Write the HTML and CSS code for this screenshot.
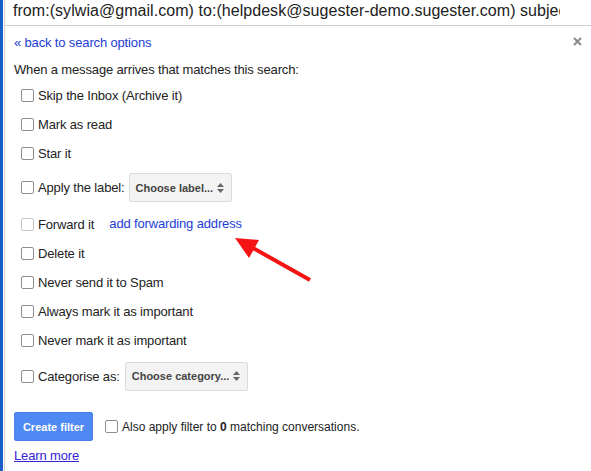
FILE: index.html
```html
<!DOCTYPE html>
<html>
<head>
<meta charset="utf-8">
<link rel="stylesheet" href="styles.css">
</head>
<body>
<div class="page">
  <div class="strip"></div>
  <div class="main">
    <div class="search"><span class="query">from:(sylwia@gmail.com) to:(helpdesk@sugester-demo.sugester.com) subject:</span></div>
    <div class="panel">
      <div class="top">
        <a class="link">« back to search options</a>
        <span class="close"><svg width="9" height="9" viewBox="0 0 9 9"><path d="M1 1L8 8M8 1L1 8" stroke="#8a8a8a" stroke-width="2"/></svg></span>
      </div>
      <div class="intro">When a message arrives that matches this search:</div>
      <div class="row"><span class="cb"></span><span>Skip the Inbox (Archive it)</span></div>
      <div class="row"><span class="cb"></span><span>Mark as read</span></div>
      <div class="row"><span class="cb"></span><span>Star it</span></div>
      <div class="row row-select"><span class="cb"></span><span>Apply the label:</span><span class="select sel-label">Choose label...<span class="arrows"><svg width="7" height="10" viewBox="0 0 7 10"><path d="M0 4L3.5 0L7 4Z M0 6L3.5 10L7 6Z" fill="#666"/></svg></span></span></div>
      <div class="row row-fwd"><span class="cb cb-off"></span><span>Forward it</span><a class="link fwd-link">add forwarding address</a></div>
      <div class="row"><span class="cb"></span><span>Delete it</span></div>
      <div class="row"><span class="cb"></span><span>Never send it to Spam</span></div>
      <div class="row"><span class="cb"></span><span>Always mark it as important</span></div>
      <div class="row"><span class="cb"></span><span>Never mark it as important</span></div>
      <div class="row row-cat"><span class="cb"></span><span>Categorise as:</span><span class="select sel-cat">Choose category...<span class="arrows"><svg width="7" height="10" viewBox="0 0 7 10"><path d="M0 4L3.5 0L7 4Z M0 6L3.5 10L7 6Z" fill="#666"/></svg></span></span></div>
      <div class="actions">
        <span class="btn">Create filter</span>
        <span class="cb"></span><span class="apply-text">Also apply filter to <b>0</b> matching conversations.</span>
      </div>
      <a class="learn">Learn more</a>
    </div>
  </div>
  <svg class="annot" width="591" height="471" viewBox="0 0 591 471">
    <line x1="253" y1="248" x2="310" y2="280" stroke="#f41414" stroke-width="4"/>
    <polygon points="235,238 259,240 249,258" fill="#f41414"/>
  </svg>
</div>
</body>
</html>
```

FILE: styles.css
```css
* { box-sizing: border-box; }
html, body { margin: 0; padding: 0; background: #fff; }
body {
  font-family: "Liberation Sans", Arial, sans-serif;
  font-size: 13px;
  letter-spacing: -0.15px;
  color: #222;
  width: 591px;
  height: 471px;
  overflow: hidden;
}
.page {
  position: relative;
  display: flex;
  height: 471px;
}
.strip {
  width: 3px;
  background: #1a5ec8;
  flex: none;
}
.main {
  flex: 1;
  margin-left: 1px;
  border-left: 1px solid #d4d4d4;
  display: flex;
  flex-direction: column;
  min-width: 0;
}
.search {
  height: 26px;
  border-bottom: 1px solid #cfcfcf;
  font-size: 16px;
  letter-spacing: 0.05px;
  line-height: 20px;
  padding: 1px 0 0 8px;
  white-space: nowrap;
  overflow: hidden;
  color: #222;
}
.query {
  display: block;
  width: 547px;
  overflow: hidden;
}
.panel {
  padding: 0 0 0 9px;
  display: flex;
  flex-direction: column;
}
.top {
  height: 32px;
  display: flex;
  align-items: center;
  justify-content: space-between;
}
.link { color: #1c3dd6; text-decoration: none; }
.close {
  display: flex;
  margin-right: 9px;
  margin-top: -2px;
}
.intro {
  height: 23px;
  line-height: 22px;
  padding-top: 1px;
}
.row {
  height: 29px;
  display: flex;
  align-items: center;
  padding-left: 7px;
}
.cb {
  width: 13px;
  height: 13px;
  border: 1px solid #8e8e8e;
  border-radius: 2px;
  background: #fff;
  margin-right: 4px;
  flex: none;
}
.cb-off { border-color: #c8c8c8; }
.row-select { height: 39px; }
.row-fwd { margin-top: 3px; }
.row-cat { height: 42px; }
.select {
  display: flex;
  align-items: center;
  height: 29px;
  border: 1px solid #dcdcdc;
  border-radius: 2px;
  background: #f3f3f3;
  font-size: 11px;
  font-weight: bold;
  letter-spacing: 0;
  color: #444;
  padding: 0 0 0 6px;
}
.sel-label { width: 103px; margin-left: 4px; }
.sel-cat { width: 123px; margin-left: 5px; }
.arrows { display: flex; margin-left: auto; margin-right: 7px; }
.fwd-link { margin-left: 15px; margin-top: -2px; }
.actions {
  display: flex;
  align-items: center;
  margin-top: 15px;
  height: 29px;
}
.apply-text { font-size: 12px; letter-spacing: 0; }
.btn {
  width: 79px;
  height: 29px;
  background: #4f89f3;
  border: 1px solid #4a80e8;
  border-radius: 2px;
  color: #fff;
  font-weight: bold;
  font-size: 11px;
  letter-spacing: 0;
  display: flex;
  align-items: center;
  justify-content: center;
  margin-right: 12px;
}
.learn {
  color: #3322d6;
  text-decoration: underline;
  margin-top: 7px;
  align-self: flex-start;
}
.annot {
  position: absolute;
  left: 0;
  top: 0;
  pointer-events: none;
}
```
